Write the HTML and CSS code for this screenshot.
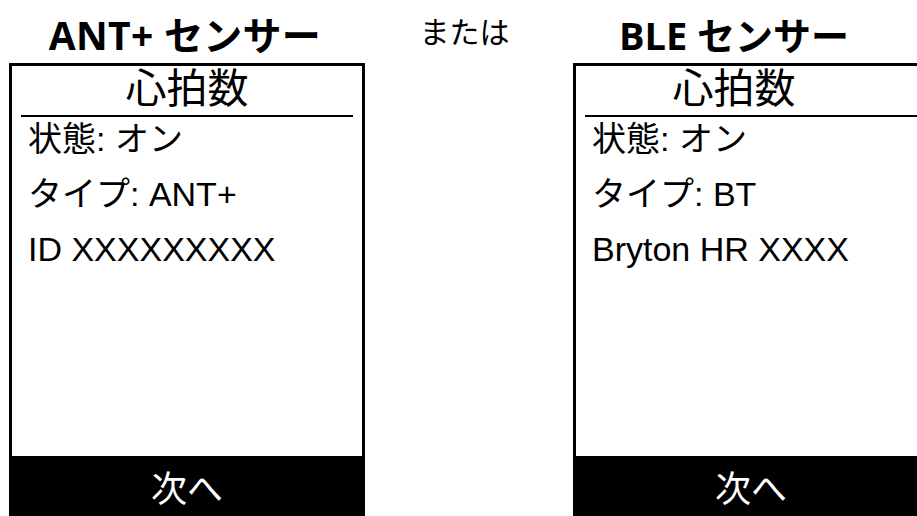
FILE: index.html
```html
<!DOCTYPE html>
<html lang="ja">
<head>
<meta charset="utf-8">
<title>心拍数センサー</title>
<link rel="stylesheet" href="styles.css">
</head>
<body>
<div class="page">
  <section class="col">
    <h2 class="heading heading-ant">ANT+ センサー</h2>
    <div class="device">
      <div class="title">心拍数</div>
      <div class="rule"></div>
      <div class="rows">
        <div class="row">状態: オン</div>
        <div class="row">タイプ: ANT+</div>
        <div class="row">ID XXXXXXXXX</div>
      </div>
      <div class="footer">次へ</div>
    </div>
  </section>
  <div class="mid">または</div>
  <section class="col col-right">
    <h2 class="heading">BLE センサー</h2>
    <div class="device">
      <div class="title">心拍数</div>
      <div class="rule rule-open"></div>
      <div class="rows">
        <div class="row">状態: オン</div>
        <div class="row">タイプ: BT</div>
        <div class="row">Bryton HR XXXX</div>
      </div>
      <div class="footer">次へ</div>
    </div>
  </section>
</div>
</body>
</html>
```
FILE: styles.css
```css
html, body {
  margin: 0;
  padding: 0;
  background: #fff;
}

body {
  width: 917px;
  height: 516px;
  overflow: hidden;
  color: #000;
  font-family: "Liberation Sans", "Noto Sans CJK JP", sans-serif;
}

.page {
  display: flex;
  align-items: flex-start;
  padding-left: 9px;
  width: 929px;
  height: 516px;
}

.col {
  flex: 0 0 356px;
  width: 356px;
  display: flex;
  flex-direction: column;
}

.heading {
  margin: 0;
  box-sizing: border-box;
  height: 63px;
  padding-top: 13px;
  font-family: "Open Sans", "Noto Sans CJK JP", sans-serif;
  font-weight: 700;
  font-size: 38px;
  line-height: 44px;
  text-align: center;
  white-space: nowrap;
}

.heading-ant {
  font-size: 39px;
  padding-right: 4px;
  letter-spacing: 0.3px;
}

.col-right .heading {
  padding-right: 34px;
}

.mid {
  flex: 0 0 208px;
  box-sizing: border-box;
  padding-top: 15px;
  padding-right: 9px;
  font-family: "Noto Sans CJK JP", sans-serif;
  font-size: 30px;
  line-height: 30px;
  text-align: center;
}

.device {
  box-sizing: border-box;
  height: 453px;
  border: 3px solid #000;
  border-bottom: none;
  display: flex;
  flex-direction: column;
}

.title {
  height: 39px;
  padding-bottom: 10px;
  font-family: "Noto Sans CJK JP", sans-serif;
  font-size: 41px;
  line-height: 39px;
  text-align: center;
}

.col-right .title {
  padding-right: 34px;
}

.rule {
  height: 2px;
  margin: 0 9px;
  background: #000;
}

.rule-open {
  margin-right: 0;
}

.rows {
  padding-left: 16px;
}

.row {
  font-size: 34px;
  line-height: 45px;
  height: 45px;
  margin-bottom: 10px;
  white-space: nowrap;
}

.footer {
  margin-top: auto;
  height: 60px;
  background: #000;
  color: #fff;
  font-family: "Noto Sans CJK JP", sans-serif;
  font-size: 36px;
  line-height: 60px;
  text-align: center;
}
```
